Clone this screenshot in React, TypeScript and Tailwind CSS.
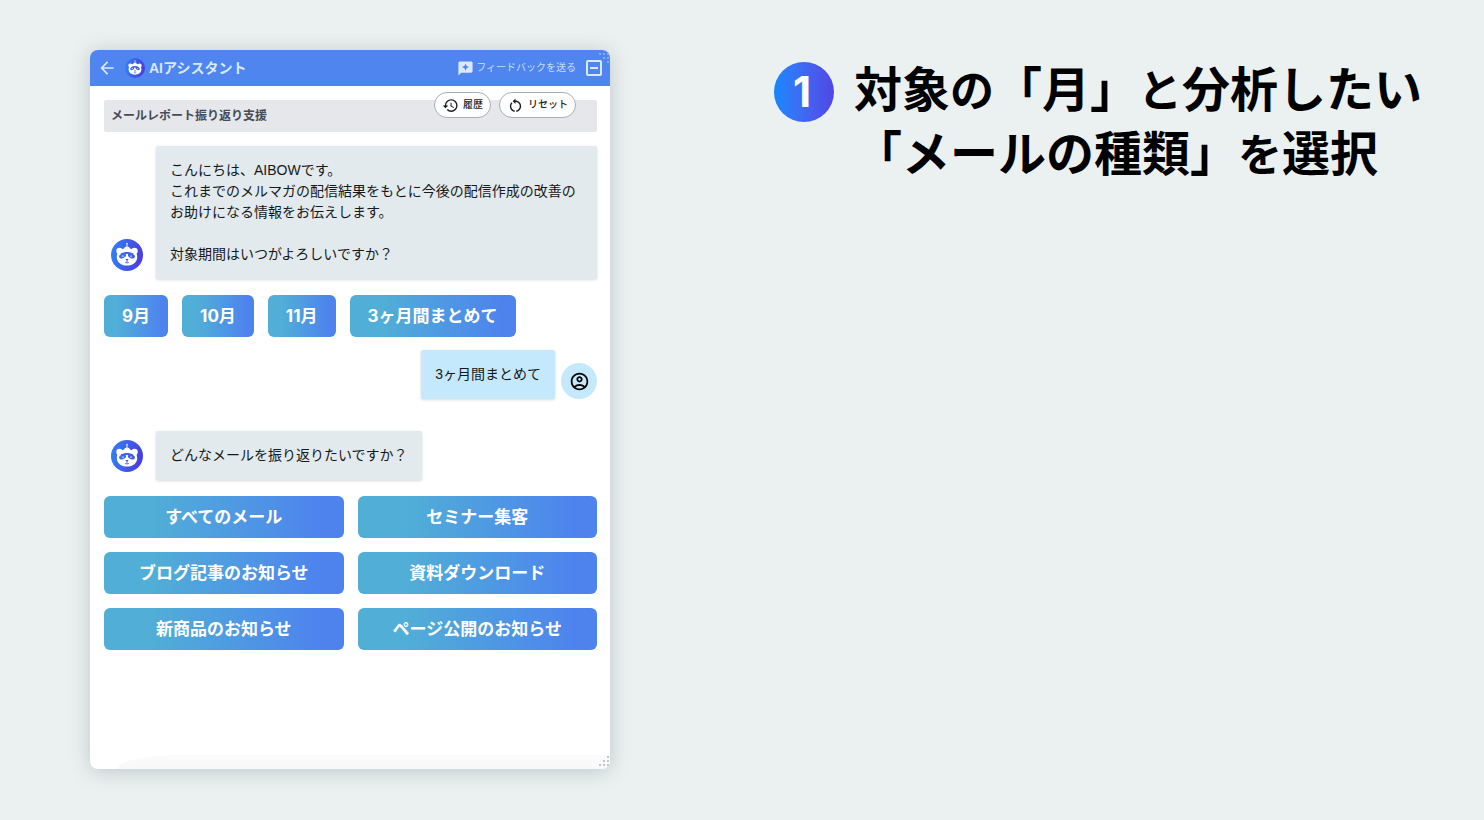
import clsx from 'clsx'
import type { ReactNode } from 'react'
import {
  MdArrowBack,
  MdHistory,
  MdOutlineAccountCircle,
  MdRestartAlt,
  MdReviews,
} from 'react-icons/md'

const months = ['9月', '10月', '11月', '3ヶ月間まとめて']

const mailTypes = [
  'すべてのメール',
  'セミナー集客',
  'ブログ記事のお知らせ',
  '資料ダウンロード',
  '新商品のお知らせ',
  'ページ公開のお知らせ',
]

type BotIconProps = {
  id: string
  className?: string
}

function BotIcon({ id, className }: BotIconProps) {
  return (
    <svg viewBox="0 0 32 32" className={className} aria-hidden="true">
      <defs>
        <linearGradient id={id} x1="0" y1="0" x2="1" y2="0.2">
          <stop offset="0" stopColor="#2f86f6" />
          <stop offset="1" stopColor="#4a3fe0" />
        </linearGradient>
      </defs>
      <circle cx="16" cy="16" r="16" fill={`url(#${id})`} />
      {/* antenna */}
      <circle cx="16" cy="4.6" r="0.9" fill="#d6e6ff" />
      <path d="M16 5v4" stroke="#d6e6ff" strokeWidth="1" />
      <path d="M13 10c.3-1.600 1.500-2.400 3-2.400s2.700.8 3 2.400z" fill="#fff" />
      {/* ears */}
      <circle cx="8.500" cy="12" r="3.200" fill="#fff" />
      <circle cx="23.500" cy="12" r="3.200" fill="#fff" />
      {/* face */}
      <path
        d="M16 9.300c6.200 0 10.200 3.500 10.200 8.600 0 5.300-4.300 8.700-10.200 8.700S5.800 23.200 5.800 17.900c0-5.100 4-8.600 10.200-8.600z"
        fill="#fff"
      />
      {/* eye patches */}
      <ellipse cx="11.600" cy="16.800" rx="3.600" ry="2.300" fill="#3d6cf0" transform="rotate(-22 11.600 16.800)" />
      <ellipse cx="20.400" cy="16.800" rx="3.600" ry="2.300" fill="#4358e8" transform="rotate(22 20.400 16.800)" />
      <path d="M9.500 14.600c3.800-2.300 9.200-2.300 13 0l-2 1.400c-2.800-1.300-6.200-1.300-9 0z" fill="#3f62ec" />
      <path d="M10.600 17.400c.6-1.200 2-1.200 2.600 0zM18.800 17.400c.6-1.200 2-1.200 2.600 0z" fill="#fff" />
      <path d="M14.300 20h3.400L16 21.900z" fill="#3d55e8" />
      <path d="M16 21.600v1.500m-1.900.3c.6.600 3.200.6 3.800 0" stroke="#3d55e8" strokeWidth="0.900" fill="none" />
    </svg>
  )
}

function ResizeDots({ className }: { className?: string }) {
  return (
    <svg viewBox="0 0 12 12" className={clsx('h-3 w-3', className)} fill="currentColor" aria-hidden="true">
      <rect x="9" y="1" width="2" height="2" />
      <rect x="5" y="5" width="2" height="2" />
      <rect x="9" y="5" width="2" height="2" />
      <rect x="1" y="9" width="2" height="2" />
      <rect x="5" y="9" width="2" height="2" />
      <rect x="9" y="9" width="2" height="2" />
    </svg>
  )
}

function Bubble({ user, children }: { user?: boolean; children: ReactNode }) {
  return (
    <div
      className={clsx(
        'rounded-xs px-3.5 py-3.5 text-[14px] leading-[21px] text-[#15181c] shadow-[0_1px_3px_rgba(0,0,0,0.15)]',
        user ? 'bg-[#c4e8fc]' : 'bg-[#e2eaed]',
      )}
    >
      {children}
    </div>
  )
}

function ChoiceButton({ children }: { children: ReactNode }) {
  return (
    <button
      type="button"
      className="h-[42px] rounded-md bg-linear-to-r from-[#51aed6] from-20% to-[#4e83ee] to-90% px-[18px] font-[Inter,'Noto_Sans_CJK_JP',sans-serif] text-[17px] leading-6 font-bold text-white"
    >
      {children}
    </button>
  )
}

function PillButton({ icon, children }: { icon: ReactNode; children: ReactNode }) {
  return (
    <button
      type="button"
      className="flex h-[26px] items-center gap-1 rounded-full border border-[#a9adb4] bg-white px-[7px] text-[10px] leading-4 font-medium text-[#1b1e23]"
    >
      {icon}
      {children}
    </button>
  )
}

function ChatPanel() {
  return (
    <section
      aria-label="AIアシスタント"
      className="relative flex w-full max-w-[520px] min-w-0 flex-1 flex-col overflow-hidden rounded-lg bg-white shadow-[0_2px_20px_rgba(60,70,80,0.25)]"
    >
      <header className="flex h-9 items-center bg-[#4e85ee] pr-2 pl-[7px] text-[#dce8fd]">
        <button type="button" aria-label="戻る">
          <MdArrowBack size={20} />
        </button>
        <BotIcon id="bot-header" className="ml-2 h-5 w-5" />
        <h1 className="ml-1 text-[14px] leading-5 font-bold">AIアシスタント</h1>
        <a href="#feedback" className="ml-auto flex items-center gap-0.5 text-[10px] leading-4 text-[#c9dbfb]">
          <MdReviews size={17} className="text-[#dce8fd]" />
          フィードバックを送る
        </a>
        <button
          type="button"
          aria-label="最小化"
          className="ml-2.5 flex h-4 w-4 items-center justify-center rounded-xs border-2 border-[#dce8fd]"
        >
          <span className="h-0.5 w-2 bg-[#dce8fd]" />
        </button>
      </header>
      <ResizeDots className="absolute top-0.5 right-0 -scale-y-100 text-[#86abf4]" />

      <div className="flex flex-1 flex-col pt-3.5 pr-[13px] pl-3.5">
        <div className="relative">
          <h2 className="rounded-xs bg-[#e5e7eb] px-[7px] py-1.5 text-[12px] leading-5 font-bold text-[#454c57]">
            メールレポート振り返り支援
          </h2>
          <div className="absolute -top-2 right-[21px] flex gap-2">
            <PillButton icon={<MdHistory size={17} />}>履歴</PillButton>
            <PillButton icon={<MdRestartAlt size={17} />}>リセット</PillButton>
          </div>
        </div>

        <div className="mt-3.5 flex items-end">
          <BotIcon id="bot-first" className="mr-[13px] mb-2 ml-[7px] h-8 w-8 shrink-0" />
          <div className="flex-1">
            <Bubble>
              <p>こんにちは、AIBOWです。</p>
              <p>これまでのメルマガの配信結果をもとに今後の配信作成の改善のお助けになる情報をお伝えします。</p>
              <p className="mt-[21px]">対象期間はいつがよろしいですか？</p>
            </Bubble>
          </div>
        </div>

        <div className="mt-4 flex flex-wrap gap-3.5">
          {months.map((month) => (
            <ChoiceButton key={month}>{month}</ChoiceButton>
          ))}
        </div>

        <div className="mt-[13px] flex items-end justify-end gap-1.5">
          <Bubble user>3ヶ月間まとめて</Bubble>
          <span className="flex h-9 w-9 items-center justify-center rounded-full bg-[#c4e8fc]">
            <MdOutlineAccountCircle size={21} />
          </span>
        </div>

        <div className="mt-8 flex items-end">
          <BotIcon id="bot-second" className="mr-[13px] mb-2 ml-[7px] h-8 w-8 shrink-0" />
          <Bubble>どんなメールを振り返りたいですか？</Bubble>
        </div>

        <div className="mt-4 grid grid-cols-2 gap-3.5">
          {mailTypes.map((type) => (
            <ChoiceButton key={type}>{type}</ChoiceButton>
          ))}
        </div>
      </div>

      <footer className="ml-7 h-3.5 rounded-tl-[60px_14px] bg-linear-to-b from-[#fbfbfb] to-[#f8f8fa]" />
      <ResizeDots className="absolute right-0 bottom-0.5 text-[#c3c5c9]" />
    </section>
  )
}

export default function App() {
  return (
    <main className="flex min-h-screen flex-col gap-10 bg-[#ebf1f1] px-4 pt-[50px] pb-[51px] font-['Liberation_Sans','Noto_Sans_CJK_JP',sans-serif] text-black lg:flex-row lg:gap-[164px] lg:pr-[60px] lg:pl-[90px]">
      <ChatPanel />
      <div className="flex shrink-0 items-start gap-5 pt-1">
        <span className="mt-2 flex h-[60px] w-[60px] shrink-0 items-center justify-center rounded-full bg-linear-to-r from-[#0f87ff] to-[#4f46e5] pr-1 font-[Inter,sans-serif] text-[42px] leading-none font-bold text-white">
          1
        </span>
        <p className="font-['Noto_Sans_CJK_JP',sans-serif] text-[48px] leading-[64px] font-bold">
          対象<span className="text-[44px] leading-none">の</span>「月」
          <span className="text-[44px] leading-none">と</span>分析したい
          <br />
          「メールの種類」<span className="text-[44px] leading-none">を</span>選択
        </p>
      </div>
    </main>
  )
}
